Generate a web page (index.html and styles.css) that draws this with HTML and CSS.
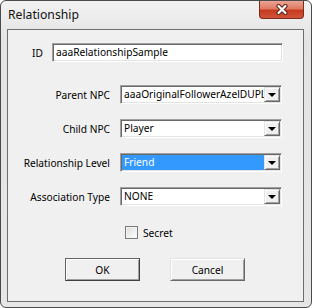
FILE: index.html
```html
<!DOCTYPE html>
<html lang="en">
<head>
    <meta charset="UTF-8">
    <meta name="viewport" content="width=device-width, initial-scale=1.0">
    <title>Relationship</title>
    <link rel="stylesheet" href="styles.css">
</head>
<body>
    <div class="window">
        <div class="titlebar">
            <span class="title">Relationship</span>
            <div class="close-btn">
                <svg width="14" height="11" viewBox="0 0 14 11">
                    <path d="M3.5 2 L10.5 9 M10.5 2 L3.5 9" stroke="#5a2418" stroke-width="4.2" stroke-linecap="round"/>
                    <path d="M3.5 2 L10.5 9 M10.5 2 L3.5 9" stroke="#ffffff" stroke-width="2.2" stroke-linecap="round"/>
                </svg>
            </div>
        </div>

        <div class="client">
            <div class="id-row">
                <span class="id-label">ID</span>
                <div class="textbox">aaaRelationshipSample</div>
            </div>

            <div class="fields">
                <span class="field-label">Parent NPC</span>
                <div class="combo">
                    <span class="combo-text">aaaOriginalFollowerAzelDUPL1</span>
                    <span class="combo-btn"><span class="arrow"></span></span>
                </div>

                <span class="field-label">Child NPC</span>
                <div class="combo">
                    <span class="combo-text">Player</span>
                    <span class="combo-btn"><span class="arrow"></span></span>
                </div>

                <span class="field-label">Relationship Level</span>
                <div class="combo">
                    <span class="combo-text selected">Friend</span>
                    <span class="combo-btn"><span class="arrow"></span></span>
                </div>

                <span class="field-label">Association Type</span>
                <div class="combo">
                    <span class="combo-text">NONE</span>
                    <span class="combo-btn"><span class="arrow"></span></span>
                </div>
            </div>

            <div class="check-row">
                <span class="checkbox"></span>
                <span class="check-label">Secret</span>
            </div>

            <div class="buttons">
                <div class="btn default-btn">OK</div>
                <div class="btn">Cancel</div>
            </div>
        </div>
    </div>
</body>
</html>
```

FILE: styles.css
```css
*{
    padding: 0;
    margin: 0;
    box-sizing: border-box;
}
body{
    background: #ffffff;
    font-family: "Noto Sans", "Open Sans", sans-serif;
    font-size: 10.2px;
    color: #000;
}

.window{
    width: 312px;
    height: 308px;
    border: 1px solid #4b4b4b;
    border-radius: 6px;
    background: linear-gradient(#f2f2f2, #e4e4e4 40px, #e6e6e6);
    display: flex;
    flex-direction: column;
}

.titlebar{
    height: 28px;
    display: flex;
    justify-content: space-between;
    align-items: flex-start;
    padding-left: 7px;
}

.title{
    font-size: 12.2px;
    margin-top: 5px;
    color: #111;
}

.close-btn{
    width: 45px;
    height: 18px;
    margin-right: 7px;
    border: 1px solid #7a2c1e;
    border-top: none;
    border-radius: 0 0 4px 4px;
    background: linear-gradient(#eba493 0%, #df7a63 45%, #c63a1f 55%, #d0553a 100%);
    display: flex;
    justify-content: center;
    align-items: center;
}

.client{
    flex: 1;
    margin: 0 7px 5px 6px;
    border: 1px solid #6e6e6e;
    background: #f0f0f0;
    padding-top: 13px;
}

.id-row{
    display: flex;
    align-items: center;
    padding-left: 24px;
}

.id-label{
    width: 20px;
}

.textbox{
    width: 231px;
    height: 19px;
    background: #ffffff;
    border: 1px solid;
    border-color: #a0a0a0 #ffffff #ffffff #a0a0a0;
    box-shadow: inset 1px 1px 0 #696969, inset -1px -1px 0 #e3e3e3;
    padding-left: 3px;
    line-height: 17px;
    white-space: nowrap;
}

.fields{
    display: grid;
    grid-template-columns: 102px 162px;
    column-gap: 10px;
    row-gap: 15px;
    margin-top: 23px;
    align-items: center;
}

.field-label{
    text-align: right;
}

.combo{
    height: 19px;
    background: #ffffff;
    border: 1px solid;
    border-color: #a0a0a0 #ffffff #ffffff #a0a0a0;
    box-shadow: inset 1px 1px 0 #696969, inset -1px -1px 0 #e3e3e3;
    padding: 1px;
    display: flex;
}

.combo-text{
    flex: 1;
    white-space: nowrap;
    overflow: hidden;
    padding-left: 2px;
    line-height: 15px;
}

.selected{
    background: #3399ff;
    color: #ffffff;
}

.combo-btn{
    width: 16px;
    height: 15px;
    background: #f0f0f0;
    border: 1px solid;
    border-color: #e3e3e3 #696969 #696969 #e3e3e3;
    box-shadow: inset 1px 1px 0 #ffffff, inset -1px -1px 0 #a0a0a0;
    display: flex;
    justify-content: center;
    align-items: center;
}

.arrow{
    width: 0;
    height: 0;
    border-left: 4px solid transparent;
    border-right: 4px solid transparent;
    border-top: 4px solid #000;
}

.check-row{
    display: flex;
    align-items: center;
    gap: 5px;
    margin-top: 20px;
    padding-left: 117px;
    height: 13px;
}

.checkbox{
    width: 13px;
    height: 13px;
    border: 1px solid #7a7a7a;
    background: linear-gradient(135deg, #dcdcdc, #ffffff);
    box-shadow: inset 0 0 0 1px #f4f4f4;
}

.buttons{
    display: flex;
    gap: 30px;
    margin-top: 19px;
    padding-left: 57px;
}

.btn{
    width: 75px;
    height: 23px;
    background: #f0f0f0;
    border: 1px solid;
    border-color: #e3e3e3 #696969 #696969 #e3e3e3;
    box-shadow: inset 1px 1px 0 #ffffff, inset -1px -1px 0 #a0a0a0;
    display: flex;
    justify-content: center;
    align-items: center;
}

.default-btn{
    border-color: #646464 #404040 #404040 #646464;
}
```
